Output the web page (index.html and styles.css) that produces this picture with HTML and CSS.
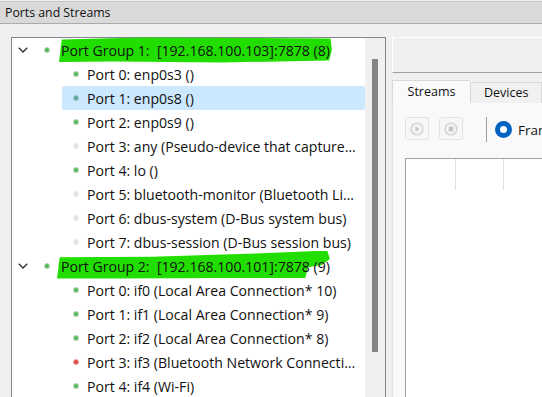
FILE: index.html
```html
<!DOCTYPE html>
<html>
<head>
<meta charset="utf-8">
<link rel="stylesheet" href="styles.css">
</head>
<body>
<div class="titlebar">Ports and Streams</div>
<div class="main">
  <div class="tree">
    <div class="rows">
      <div class="row group">
        <span class="twisty"><svg width="10" height="6" viewBox="0 0 10 6"><polyline points="0.8,0.8 5,5 9.2,0.8" fill="none" stroke="#2b2b2b" stroke-width="1.3"/></svg></span>
        <span class="dot green"></span>
        <span class="label hl hl1">Port Group 1:&nbsp; [192.168.100.103]:7878 (8)</span>
      </div>
      <div class="row child"><div class="item"><span class="dot green"></span><span class="label">Port 0: enp0s3 ()</span></div></div>
      <div class="row child"><div class="item sel"><span class="dot teal"></span><span class="label">Port 1: enp0s8 ()</span></div></div>
      <div class="row child"><div class="item"><span class="dot green"></span><span class="label">Port 2: enp0s9 ()</span></div></div>
      <div class="row child"><div class="item"><span class="dot gray"></span><span class="label">Port 3: any (Pseudo-device that captures on all interfaces)</span></div></div>
      <div class="row child"><div class="item"><span class="dot green"></span><span class="label">Port 4: lo ()</span></div></div>
      <div class="row child"><div class="item"><span class="dot gray"></span><span class="label">Port 5: bluetooth-monitor (Bluetooth Linux Monitor)</span></div></div>
      <div class="row child"><div class="item"><span class="dot gray"></span><span class="label">Port 6: dbus-system (D-Bus system bus)</span></div></div>
      <div class="row child"><div class="item"><span class="dot gray"></span><span class="label">Port 7: dbus-session (D-Bus session bus)</span></div></div>
      <div class="row group">
        <span class="twisty"><svg width="10" height="6" viewBox="0 0 10 6"><polyline points="0.8,0.8 5,5 9.2,0.8" fill="none" stroke="#2b2b2b" stroke-width="1.3"/></svg></span>
        <span class="dot green"></span>
        <span class="label hl hl2">Port Group 2:&nbsp; [192.168.100.101]:7878 (9)</span>
      </div>
      <div class="row child"><div class="item"><span class="dot green"></span><span class="label">Port 0: if0 (Local Area Connection* 10)</span></div></div>
      <div class="row child"><div class="item"><span class="dot green"></span><span class="label">Port 1: if1 (Local Area Connection* 9)</span></div></div>
      <div class="row child"><div class="item"><span class="dot green"></span><span class="label">Port 2: if2 (Local Area Connection* 8)</span></div></div>
      <div class="row child"><div class="item"><span class="dot red"></span><span class="label">Port 3: if3 (Bluetooth Network Connection)</span></div></div>
      <div class="row child"><div class="item"><span class="dot green"></span><span class="label">Port 4: if4 (Wi-Fi)</span></div></div>
    </div>
    <div class="scroll"><div class="thumb"></div></div>
  </div>
  <div class="right">
    <div class="topbox"></div>
    <div class="tabs">
      <div class="tab active">Streams</div>
      <div class="tab">Devices</div>
    </div>
    <div class="pane">
      <div class="toolbar">
        <div class="tbtn"><svg width="14" height="14" viewBox="0 0 14 14"><circle cx="7" cy="7" r="6" fill="#f2f2f2" stroke="#cfcfcf" stroke-width="1.2"/><polygon points="5.6,4.3 9.2,7 5.6,9.7" fill="#c4c4c4"/></svg></div>
        <div class="tbtn"><svg width="14" height="14" viewBox="0 0 14 14"><circle cx="7" cy="7" r="6" fill="#f2f2f2" stroke="#cfcfcf" stroke-width="1.2"/><rect x="4.8" y="4.8" width="4.4" height="4.4" fill="#c4c4c4"/></svg></div>
        <div class="sep"></div>
        <span class="radio"></span>
        <span class="rlabel">Frames</span>
      </div>
      <div class="table">
        <div class="thead">
          <div class="th c1"></div>
          <div class="th c2"></div>
          <div class="th c3"></div>
        </div>
      </div>
    </div>
  </div>
</div>
</body>
</html>
```
FILE: styles.css
```css
html, body {
  margin: 0;
  padding: 0;
}
body {
  width: 542px;
  height: 397px;
  overflow: hidden;
  background: #f0f0f0;
  font-family: "Open Sans", "Noto Sans", sans-serif;
  color: #111;
}
.titlebar {
  height: 21px;
  margin-top: 1px;
  border-top: 1px solid #c4c4c4;
  border-bottom: 1px solid #ababab;
  background: #d9d9d9;
  font-size: 12.3px;
  line-height: 21px;
  padding-left: 5px;
}
.main {
  display: flex;
  padding: 13px 0 0 11px;
}
.tree {
  display: flex;
  width: 373px;
  height: 380px;
  border: 1px solid #828790;
  background: #fff;
  flex-shrink: 0;
}
.rows {
  flex: 1;
  min-width: 0;
  font-size: 14.1px;
}
.row {
  height: 24px;
  display: flex;
  align-items: center;
}
.twisty {
  width: 22px;
  display: flex;
  justify-content: center;
  align-items: center;
  flex-shrink: 0;
}
.group .dot {
  margin-left: 10px;
}
.group .label {
  margin-left: 11px;
}
.hl {
  position: relative;
  z-index: 0;
  white-space: nowrap;
}
.hl::before {
  content: "";
  position: absolute;
  z-index: -1;
  background: #22de00;
}
.hl1::before {
  left: -2px;
  right: -2px;
  top: -4px;
  bottom: -3px;
  clip-path: polygon(1% 12%, 30% 4%, 70% 6%, 99.5% 8%, 100% 50%, 99% 92%, 60% 100%, 20% 96%, 0% 98%);
}
.hl2::before {
  left: -4px;
  right: 0px;
  top: -6px;
  bottom: -3px;
  clip-path: polygon(1% 24%, 35% 22%, 75% 10%, 99% 0%, 100% 30%, 97% 52%, 92% 60%, 91% 98%, 60% 98%, 20% 100%, 0% 100%);
}
.child {
  padding-left: 50px;
}
.item {
  flex: 1;
  min-width: 0;
  height: 24px;
  display: flex;
  align-items: center;
  padding-left: 11px;
  border-radius: 2px;
}
.item.sel {
  background: #cce8ff;
}
.item .label {
  margin-left: 8px;
  white-space: nowrap;
  overflow: hidden;
  text-overflow: ellipsis;
  min-width: 0;
  padding-right: 6px;
}
.dot {
  width: 4px;
  height: 4px;
  border-radius: 50%;
  flex-shrink: 0;
  border: 1px solid;
}
.dot.green {
  background: #5cb85c;
  border-color: #a9d9a9;
}
.dot.teal {
  background: #5aa89a;
  border-color: #9bc9c6;
}
.dot.gray {
  background: #e2e2e2;
  border-color: #ececec;
}
.dot.red {
  background: #e04848;
  border-color: #f0a0a0;
}
.scroll {
  width: 20px;
  background: #f0f0f0;
  flex-shrink: 0;
}
.thumb {
  margin: 21px 0 0 7px;
  width: 6px;
  height: 293px;
  background: #858585;
}
.right {
  flex: 1;
  margin-left: 6px;
  min-width: 0;
}
.topbox {
  height: 34px;
  border-top: 1px solid #fff;
  border-left: 1px solid #fff;
  border-bottom: 1px solid #a0a0a0;
  background: #efefef;
}
.tabs {
  display: flex;
  margin-top: 7px;
  align-items: flex-end;
  font-size: 12.5px;
}
.tab {
  height: 20px;
  line-height: 20px;
  border: 1px solid #d9d9d9;
  border-bottom: none;
  background: #f0f0f0;
  padding: 0 13px;
  white-space: nowrap;
  flex-shrink: 0;
}
.tab.active {
  height: 22px;
  line-height: 21px;
  width: 77px;
  padding: 0;
  text-align: center;
  background: #f9f9f9;
  border-right: none;
}
.pane {
  height: 300px;
  background: #f9f9f9;
  border-left: 1px solid #e3e3e3;
  padding: 14px 0 0 12px;
}
.toolbar {
  display: flex;
  align-items: center;
  height: 25px;
  white-space: nowrap;
}
.tbtn {
  width: 22px;
  height: 21px;
  border: 1px solid #e2e2e2;
  border-radius: 3px;
  background: #f7f7f7;
  display: flex;
  align-items: center;
  justify-content: center;
  margin-right: 10px;
  align-self: flex-start;
  flex-shrink: 0;
}
.sep {
  width: 1px;
  height: 25px;
  background: #a0a0a0;
  margin-left: 13px;
  flex-shrink: 0;
}
.radio {
  width: 7px;
  height: 7px;
  border: 5px solid #0063c1;
  border-radius: 50%;
  background: #fff;
  margin-left: 8px;
  flex-shrink: 0;
}
.rlabel {
  margin-left: 6px;
  font-size: 13.5px;
  flex-shrink: 0;
}
.table {
  margin-top: 16px;
  height: 240px;
  background: #fff;
  border-top: 1px solid #a0a0a0;
  border-left: 1px solid #a0a0a0;
}
.thead {
  display: flex;
  height: 31px;
}
.th {
  width: 48px;
  border-right: 1px solid #e0e0e0;
  flex-shrink: 0;
}
.th.c1 {
  width: 49px;
}
.th.c2 {
  width: 47px;
}
.th.c3 {
  border-right: none;
}
```
